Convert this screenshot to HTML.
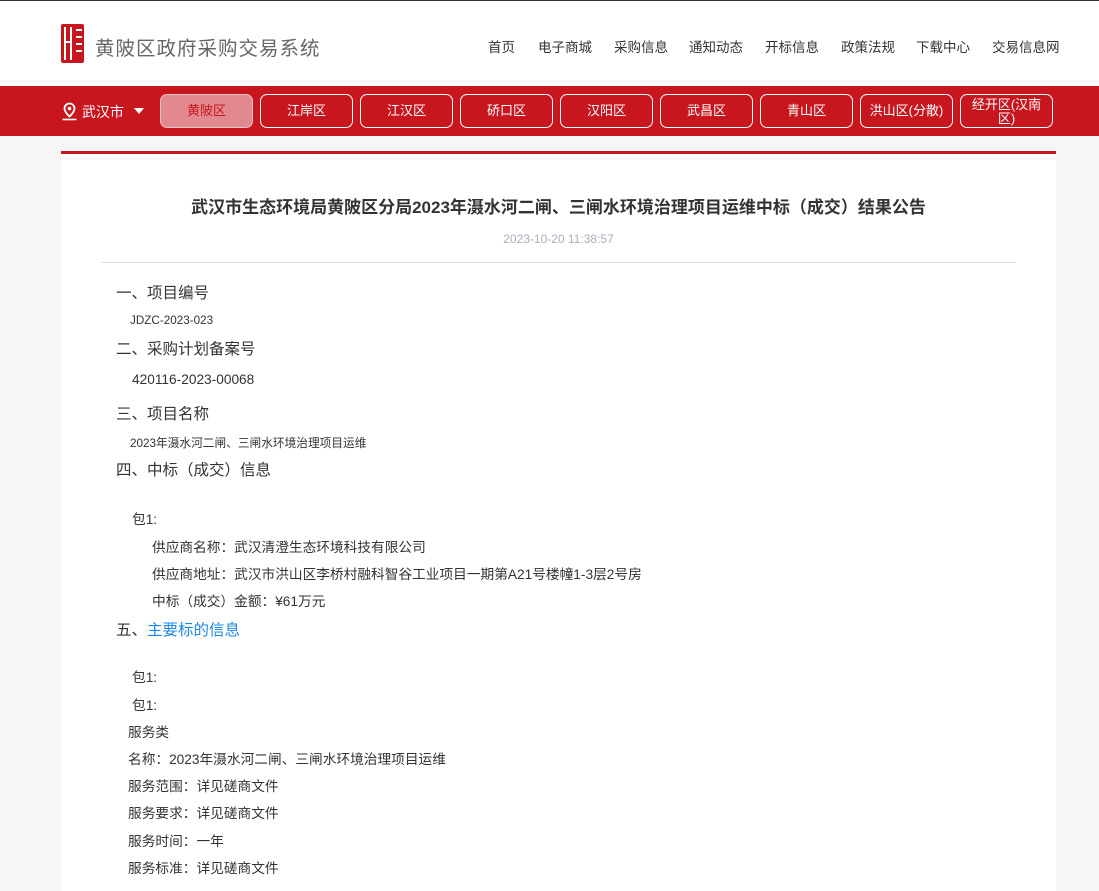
<!DOCTYPE html>
<html><head><meta charset="utf-8"><style>
*{margin:0;padding:0;box-sizing:border-box}
body{width:1099px;height:877px;overflow:hidden;background:#f6f6f6;font-family:"Liberation Sans","Noto Sans CJK SC",sans-serif;color:#333}
.top{height:86px;background:#fff;position:relative;border-top:1px solid #333}
.logo{position:absolute;left:61px;top:23px;width:23px;height:39px;background:#c8161e;border-radius:2px}
.logo i{position:absolute;background:#fff}
.title{position:absolute;left:95px;top:31px;font-size:19.5px;color:#666;letter-spacing:1px}
.nav{position:absolute;top:35px;font-size:13.5px;color:#333}
.bar{height:50px;background:#c8161e;position:relative}
.city{position:absolute;left:61px;top:16px;color:#fff;font-size:14px}
.tab{position:absolute;top:8px;width:93px;height:34px;border:1px solid #fff;border-radius:7px;color:#fff;font-size:13px;text-align:center;line-height:32px}
.tab.a{background:#e28990;color:#c8161e;border-color:#f1c4c6}
.card{position:absolute;left:61px;top:151px;width:995px;height:740px;background:#fff;border-top:3px solid #c8161e}
h1{position:absolute;left:0;width:995px;top:39px;text-align:center;font-size:17px;font-weight:bold;color:#333}
.date{position:absolute;width:995px;top:78px;text-align:center;font-size:12px;color:#a9afbf}
.hr{position:absolute;left:40px;width:915px;top:108px;border-top:1px solid #ddd}
.t{position:absolute;white-space:nowrap}
.h{font-size:15.5px;color:#333;left:55px}
.s12{font-size:11.7px}
.s14{font-size:13.7px}
</style></head><body>
<div class="top">
<div class="logo"><i style="left:3px;top:3px;width:2px;height:33px"></i><i style="left:9px;top:3px;width:2px;height:33px"></i><i style="left:15px;top:5px;width:6px;height:2px"></i><i style="left:15px;top:12px;width:6px;height:2px"></i><i style="left:15px;top:19px;width:6px;height:2px"></i><i style="left:15px;top:26px;width:6px;height:2px"></i><i style="left:5px;top:17px;width:4px;height:2px"></i></div>
<div class="title">黄陂区政府采购交易系统</div>
<div class="nav" style="left:488px">首页</div>
<div class="nav" style="left:538px">电子商城</div>
<div class="nav" style="left:614px">采购信息</div>
<div class="nav" style="left:689px">通知动态</div>
<div class="nav" style="left:765px">开标信息</div>
<div class="nav" style="left:841px">政策法规</div>
<div class="nav" style="left:916px">下载中心</div>
<div class="nav" style="left:992px">交易信息网</div>
</div>
<div class="bar">
<div class="city"><svg width="17" height="19" viewBox="0 0 17 19" style="vertical-align:-4px"><path d="M8.5 1.5a5 5 0 0 0-5 5c0 3.5 5 8 5 8s5-4.5 5-8a5 5 0 0 0-5-5z" fill="none" stroke="#fff" stroke-width="1.8"/><circle cx="8.5" cy="6.5" r="1.8" fill="#fff"/><path d="M1.5 17.5h14" stroke="#fff" stroke-width="1.6"/></svg> 武汉市 <span style="display:inline-block;margin-left:6px;border:5px solid transparent;border-top:6px solid #fff;vertical-align:-2px"></span></div>
<div class="tab a" style="left:160px">黄陂区</div>
<div class="tab" style="left:260px">江岸区</div>
<div class="tab" style="left:360px">江汉区</div>
<div class="tab" style="left:460px">硚口区</div>
<div class="tab" style="left:560px">汉阳区</div>
<div class="tab" style="left:660px">武昌区</div>
<div class="tab" style="left:760px">青山区</div>
<div class="tab" style="left:860px">洪山区(分散)</div>
<div class="tab" style="left:960px;line-height:14px;padding-top:3px">经开区(汉南<br>区)</div>
</div>
<div class="card">
<h1>武汉市生态环境局黄陂区分局2023年滠水河二闸、三闸水环境治理项目运维中标（成交）结果公告</h1>
<div class="date">2023-10-20 11:38:57</div>
<div class="hr"></div>
<div class="t h" style="top:127px">一、项目编号</div>
<div class="t s12" style="left:69px;top:160px">JDZC-2023-023</div>
<div class="t h" style="top:183px">二、采购计划备案号</div>
<div class="t s14" style="left:71px;top:218px">420116-2023-00068</div>
<div class="t h" style="top:248px">三、项目名称</div>
<div class="t s12" style="left:69px;top:280px">2023年滠水河二闸、三闸水环境治理项目运维</div>
<div class="t h" style="top:304px">四、中标（成交）信息</div>
<div class="t s14" style="left:71px;top:354px">包1:</div>
<div class="t s14" style="left:91px;top:382px">供应商名称：武汉清澄生态环境科技有限公司</div>
<div class="t s14" style="left:91px;top:409px">供应商地址：武汉市洪山区李桥村融科智谷工业项目一期第A21号楼幢1-3层2号房</div>
<div class="t s14" style="left:91px;top:436px">中标（成交）金额：¥61万元</div>
<div class="t h" style="top:464px">五、<span style="color:#1e88e5">主要标的信息</span></div>
<div class="t s14" style="left:71px;top:512px">包1:</div>
<div class="t s14" style="left:71px;top:540px">包1:</div>
<div class="t s14" style="left:67px;top:567px">服务类</div>
<div class="t s14" style="left:67px;top:594px">名称：2023年滠水河二闸、三闸水环境治理项目运维</div>
<div class="t s14" style="left:67px;top:621px">服务范围：详见磋商文件</div>
<div class="t s14" style="left:67px;top:648px">服务要求：详见磋商文件</div>
<div class="t s14" style="left:67px;top:676px">服务时间：一年</div>
<div class="t s14" style="left:67px;top:703px">服务标准：详见磋商文件</div>
</div>
</body></html>
